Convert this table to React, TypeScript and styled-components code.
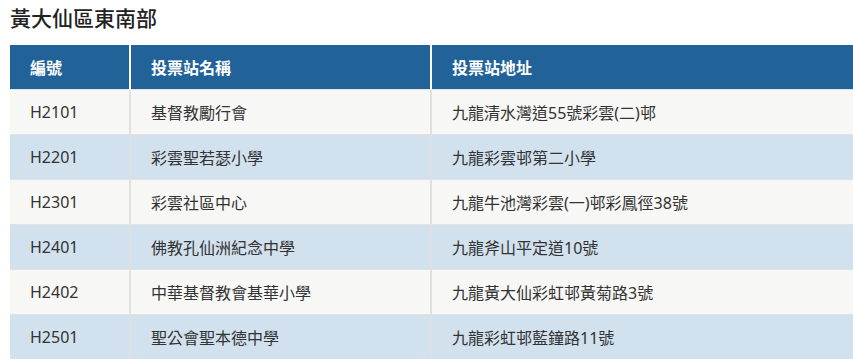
import styled, {createGlobalStyle} from 'styled-components';

interface Station {
    code: string;
    name: string;
    address: string;
}

const stations: Station[] = [
    {code: 'H2101', name: '基督教勵行會', address: '九龍清水灣道55號彩雲(二)邨'},
    {code: 'H2201', name: '彩雲聖若瑟小學', address: '九龍彩雲邨第二小學'},
    {code: 'H2301', name: '彩雲社區中心', address: '九龍牛池灣彩雲(一)邨彩鳳徑38號'},
    {code: 'H2401', name: '佛教孔仙洲紀念中學', address: '九龍斧山平定道10號'},
    {code: 'H2402', name: '中華基督教會基華小學', address: '九龍黃大仙彩虹邨黃菊路3號'},
    {code: 'H2501', name: '聖公會聖本德中學', address: '九龍彩虹邨藍鐘路11號'},
];

const GlobalStyle = createGlobalStyle`
    body {
        margin: 0;
        background: #ffffff;
        font-family: "Noto Sans", "Noto Sans CJK TC", sans-serif;
        color: #333333;
    }
`;

const Page = styled.div`
    padding: 5px 0 0 10px;
`;

const Title = styled.h2`
    margin: 0 0 13px;
    font-size: 21px;
    line-height: 27px;
    font-weight: 500;
    color: #222222;
`;

const Table = styled.table`
    width: 843px;
    border-collapse: collapse;
    table-layout: fixed;
`;

const HeadCell = styled.th<{$width?: number}>`
    box-sizing: border-box;
    width: ${(p) => (p.$width ? `${p.$width}px` : 'auto')};
    height: 44px;
    padding: 0 0 0 20px;
    background: #216299;
    color: #ffffff;
    font-size: 16px;
    font-weight: 700;
    text-align: left;
    border-left: 2px solid #ffffff;

    &:first-child {
        border-left: none;
    }
`;

const Row = styled.tr<{$alt: boolean}>`
    background: ${(p) => (p.$alt ? '#d2e1ee' : '#f7f7f5')};
    border-top: 1px solid #e2e2e2;
`;

const Cell = styled.td`
    height: 44px;
    padding: 0 0 0 20px;
    font-size: 16px;
    color: #333333;
    border-left: 2px solid #e0e0e0;

    &:first-child {
        border-left: none;
    }
`;

export default function App() {
    return (
        <Page>
            <GlobalStyle />
            <Title>黃大仙區東南部</Title>
            <Table>
                <thead>
                    <tr>
                        <HeadCell $width={120}>編號</HeadCell>
                        <HeadCell $width={301}>投票站名稱</HeadCell>
                        <HeadCell>投票站地址</HeadCell>
                    </tr>
                </thead>
                <tbody>
                    {stations.map((s, i) => (
                        <Row key={s.code} $alt={i % 2 === 1}>
                            <Cell>{s.code}</Cell>
                            <Cell>{s.name}</Cell>
                            <Cell>{s.address}</Cell>
                        </Row>
                    ))}
                </tbody>
            </Table>
        </Page>
    );
}
